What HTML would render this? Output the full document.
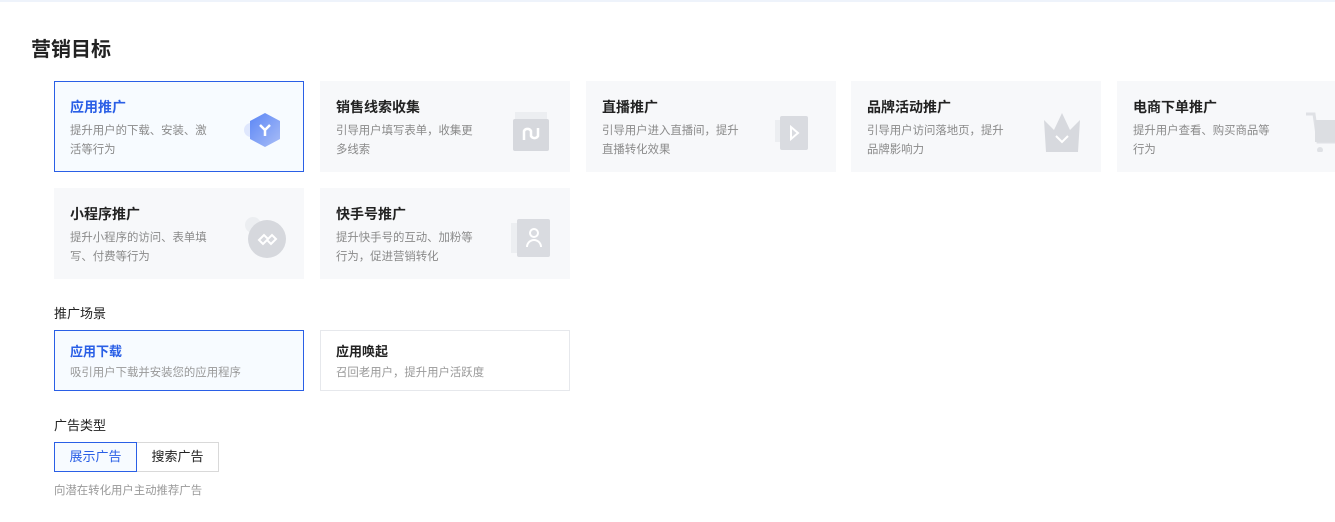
<!DOCTYPE html>
<html><head><meta charset="utf-8"><style>
*{box-sizing:border-box;margin:0;padding:0}
body{width:1335px;height:522px;overflow:hidden;background:#fff;font-family:"Liberation Sans","Noto Sans CJK SC",sans-serif;position:relative;color:#1f1f1f}
.top{position:absolute;left:0;top:0;width:1335px;height:2px;background:#eef3fb}
h1{position:absolute;left:31px;top:33px;font-size:20px;font-weight:bold;color:#222}
.card{position:absolute;width:250px;height:91px;background:#f7f8fa;border:1px solid #f7f8fa}
.card.sel{background:#f7fbff;border:1px solid #2a5fe6}
.card .t{position:absolute;left:15px;top:15px;font-size:14px;font-weight:bold;color:#222}
.card.sel .t{color:#2a5fe6}
.card .d{position:absolute;left:15px;top:40px;width:140px;font-size:11.4px;line-height:19px;color:#8a8a8a}
.ic{position:absolute;left:188px;top:26px;width:44px;height:44px}
.lbl{position:absolute;left:54px;font-size:13px;color:#222}
.sc{position:absolute;top:330px;width:250px;height:61px;border:1px solid #e6e8ec;background:#fff}
.sc.sel{border-color:#2a5fe6;background:#f7fbff}
.sc .t{position:absolute;left:15px;top:10px;font-size:13px;font-weight:bold;color:#222}
.sc.sel .t{color:#2a5fe6}
.sc .d{position:absolute;left:15px;top:33px;font-size:11.4px;color:#999}
.btn{position:absolute;top:442px;height:30px;width:83px;border:1px solid #d9d9d9;font-size:13px;text-align:center;line-height:28px;color:#222;background:#fff}
.btn.sel{border-color:#2a5fe6;color:#2a5fe6;background:#f7fbff;z-index:2}
</style></head><body>
<div class="top"></div>
<h1>营销目标</h1>

<div class="card sel" style="left:54px;top:81px"><div class="t">应用推广</div><div class="d">提升用户的下载、安装、激活等行为</div>
<svg class="ic" viewBox="0 0 44 44"><defs><linearGradient id="g1" x1="0" y1="0" x2="1" y2="1"><stop offset="0" stop-color="#5b86f5"/><stop offset="1" stop-color="#a9bdf7"/></linearGradient></defs><ellipse cx="8" cy="22" rx="7" ry="7" fill="#dfe7fd"/><polygon points="22,5 37,13 37,31 22,39 7,31 7,13" fill="url(#g1)"/><path d="M17 17 L22 22 L27 17 M22 22 V28" stroke="#fff" stroke-width="2.5" fill="none"/></svg></div>

<div class="card" style="left:320px;top:81px"><div class="t">销售线索收集</div><div class="d">引导用户填写表单，收集更多线索</div>
<svg class="ic" viewBox="0 0 44 44"><rect x="6" y="4" width="32" height="10" fill="#eceef1"/><rect x="4" y="11" width="36" height="32" rx="2" fill="#d6d8dd"/><path d="M15 32 V23 a4 4 0 0 1 7 0 V28 a4 4 0 0 0 7 0 V20" stroke="#fff" stroke-width="2.5" fill="none"/></svg></div>

<div class="card" style="left:586px;top:81px"><div class="t">直播推广</div><div class="d">引导用户进入直播间，提升直播转化效果</div>
<svg class="ic" viewBox="0 0 44 44"><rect x="-3" y="12" width="12" height="22" fill="#eceef1"/><rect x="5" y="8" width="28" height="34" rx="2" fill="#d9dbe0"/><path d="M16 19 L23 25 L16 31 Z" stroke="#fff" stroke-width="2" fill="none"/></svg></div>

<div class="card" style="left:851px;top:81px"><div class="t">品牌活动推广</div><div class="d">引导用户访问落地页，提升品牌影响力</div>
<svg class="ic" viewBox="0 0 44 44"><polygon points="4,12 14,22 22,5 30,22 40,12 38,44 6,44" fill="#d7d9de"/><path d="M16 28 L22 34 L28 28" stroke="#fff" stroke-width="2" fill="none"/></svg></div>

<div class="card" style="left:1117px;top:81px"><div class="t">电商下单推广</div><div class="d">提升用户查看、购买商品等行为</div>
<svg class="ic" viewBox="0 0 44 44"><path d="M0 6 H8 L12 34 H30" stroke="#dfe1e5" stroke-width="3" fill="none"/><rect x="9" y="12" width="30" height="22" fill="#dcdee2"/><circle cx="14" cy="42" r="3" fill="#dfe1e5"/><path d="M30 23 h8 M34 19 v8" stroke="#fff" stroke-width="2"/></svg></div>

<div class="card" style="left:54px;top:188px"><div class="t">小程序推广</div><div class="d">提升小程序的访问、表单填写、付费等行为</div>
<svg class="ic" viewBox="0 0 44 44"><circle cx="10" cy="10" r="8" fill="#eceef1"/><circle cx="24" cy="24" r="19" fill="#d6d8dd"/><path d="M16 25 L21 20 L25 24 L29 20 L33 24 L28 29 L24 25 L20 29 Z" stroke="#fff" stroke-width="2" fill="none"/></svg></div>

<div class="card" style="left:320px;top:188px"><div class="t">快手号推广</div><div class="d">提升快手号的互动、加粉等行为，促进营销转化</div>
<svg class="ic" viewBox="0 0 44 44"><rect x="2" y="8" width="10" height="30" fill="#eceef1"/><rect x="8" y="4" width="33" height="38" rx="2" fill="#d9dbe0"/><circle cx="25" cy="18" r="4" stroke="#fff" stroke-width="2" fill="none"/><path d="M18 32 a7 7 0 0 1 14 0" stroke="#fff" stroke-width="2" fill="none"/></svg></div>

<div class="lbl" style="top:303px">推广场景</div>
<div class="sc sel" style="left:54px"><div class="t">应用下载</div><div class="d">吸引用户下载并安装您的应用程序</div></div>
<div class="sc" style="left:320px"><div class="t">应用唤起</div><div class="d">召回老用户，提升用户活跃度</div></div>

<div class="lbl" style="top:415px">广告类型</div>
<div class="btn sel" style="left:54px">展示广告</div>
<div class="btn" style="left:136px">搜索广告</div>
<div style="position:absolute;left:54px;top:482px;font-size:11.4px;color:#999">向潜在转化用户主动推荐广告</div>
</body></html>
